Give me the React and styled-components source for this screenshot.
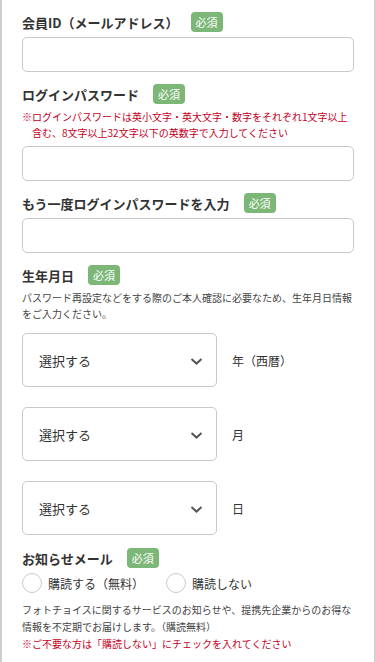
import React, { useState } from 'react';
import styled, { createGlobalStyle } from 'styled-components';

const GlobalStyle = createGlobalStyle`
  * {
    box-sizing: border-box;
  }
  body {
    margin: 0;
    background: #fff;
    font-family: "Noto Sans CJK JP", "Noto Sans", sans-serif;
    color: #333;
  }
`

const Page = styled.div`
  min-height: 662px;
  padding: 12px 20px 0;
  border-left: 2px solid #cfcfcf;
  border-right: 1px solid #cfcfcf;
`

const Field = styled.div`
  margin-bottom: ${p => p.$mb || 12}px;
`

const LabelRow = styled.div`
  display: flex;
  align-items: center;
  height: 20px;
  margin-bottom: 5px;
`

const Label = styled.span`
  font-size: 13px;
  font-weight: bold;
  color: #333;
  margin-right: ${p => p.$gap || 14}px;
`

const Badge = styled.span`
  display: inline-flex;
  align-items: center;
  justify-content: center;
  width: 32px;
  height: 20px;
  border-radius: 4px;
  background: #7cb777;
  color: #fff;
  font-size: 11px;
`

const Input = styled.input`
  display: block;
  width: 100%;
  height: 35px;
  border: 1px solid #c9c9c9;
  border-radius: 5px;
  outline: none;
  padding: 0 10px;
  font-size: 13px;
`

const Note = styled.p`
  margin: 0 0 5px;
  padding-left: 10px;
  text-indent: -10px;
  font-size: 10px;
  line-height: 16px;
  color: #c4001e;
`

const Desc = styled.p`
  margin: 0 0 ${p => p.$mb || 0}px;
  font-size: 10px;
  line-height: ${p => p.$lh || 16}px;
  color: #444;
`

const SelectList = styled.div`
  display: flex;
  flex-direction: column;
  gap: 20px;
  margin-top: 11px;
`

const SelectRow = styled.div`
  display: flex;
  align-items: center;
`

const SelectBox = styled.div`
  position: relative;
  width: 195px;
  height: 54px;
  border: 1px solid #c9c9c9;
  border-radius: 5px;
  display: flex;
  align-items: center;
  padding-left: 16px;
  font-size: 13px;
  color: #333;

  svg {
    position: absolute;
    right: 13px;
    top: 50%;
    transform: translateY(-30%);
  }
`

const SelectUnit = styled.span`
  margin-left: 15px;
  font-size: 12px;
  color: #333;
`

const RadioGroup = styled.div`
  display: flex;
  align-items: center;
  gap: 22px;
  margin-bottom: 8px;
`

const RadioItem = styled.label`
  display: flex;
  align-items: center;
  gap: 6px;
  cursor: pointer;
  font-size: 12px;
  color: #333;
`

const RadioCircle = styled.span`
  width: 20px;
  height: 20px;
  border-radius: 50%;
  border: 1px solid #c9c9c9;
  display: flex;
  align-items: center;
  justify-content: center;

  &::after {
    content: '';
    width: 10px;
    height: 10px;
    border-radius: 50%;
    background: ${p => (p.$checked ? '#7cb777' : 'transparent')};
  }
`

const Red = styled.span`
  color: #c4001e;
`

const Chevron = () => (
  <svg width="13" height="8" viewBox="0 0 13 8">
    <path d="M1.5 1.5 L6.5 6 L11.5 1.5" fill="none" stroke="#555" strokeWidth="2" />
  </svg>
)

const dateFields = ['年（西暦）', '月', '日']

const App = () => {
  const [mail, setMail] = useState('')

  return (
    <>
      <GlobalStyle />
      <Page>
        <Field>
          <LabelRow>
            <Label $gap={12}>会員ID（メールアドレス）</Label>
            <Badge>必須</Badge>
          </LabelRow>
          <Input type="email" />
        </Field>

        <Field>
          <LabelRow>
            <Label>ログインパスワード</Label>
            <Badge>必須</Badge>
          </LabelRow>
          <Note>※ログインパスワードは英小文字・英大文字・数字をそれぞれ1文字以上含む、8文字以上32文字以下の英数字で入力してください</Note>
          <Input type="password" />
        </Field>

        <Field>
          <LabelRow>
            <Label>もう一度ログインパスワードを入力</Label>
            <Badge>必須</Badge>
          </LabelRow>
          <Input type="password" />
        </Field>

        <Field $mb={13}>
          <LabelRow>
            <Label>生年月日</Label>
            <Badge>必須</Badge>
          </LabelRow>
          <Desc>パスワード再設定などをする際のご本人確認に必要なため、生年月日情報をご入力ください。</Desc>
          <SelectList>
            {dateFields.map(unit => (
              <SelectRow key={unit}>
                <SelectBox>
                  選択する
                  <Chevron />
                </SelectBox>
                <SelectUnit>{unit}</SelectUnit>
              </SelectRow>
            ))}
          </SelectList>
        </Field>

        <Field>
          <LabelRow>
            <Label>お知らせメール</Label>
            <Badge>必須</Badge>
          </LabelRow>
          <RadioGroup>
            <RadioItem onClick={() => setMail('yes')}>
              <RadioCircle $checked={mail === 'yes'} />
              購読する（無料）
            </RadioItem>
            <RadioItem onClick={() => setMail('no')}>
              <RadioCircle $checked={mail === 'no'} />
              購読しない
            </RadioItem>
          </RadioGroup>
          <Desc $lh={17}>
            フォトチョイスに関するサービスのお知らせや、提携先企業からのお得な情報を不定期でお届けします。（購読無料）
            <br />
            <Red>※ご不要な方は「購読しない」にチェックを入れてください</Red>
          </Desc>
        </Field>
      </Page>
    </>
  )
}

export default App
